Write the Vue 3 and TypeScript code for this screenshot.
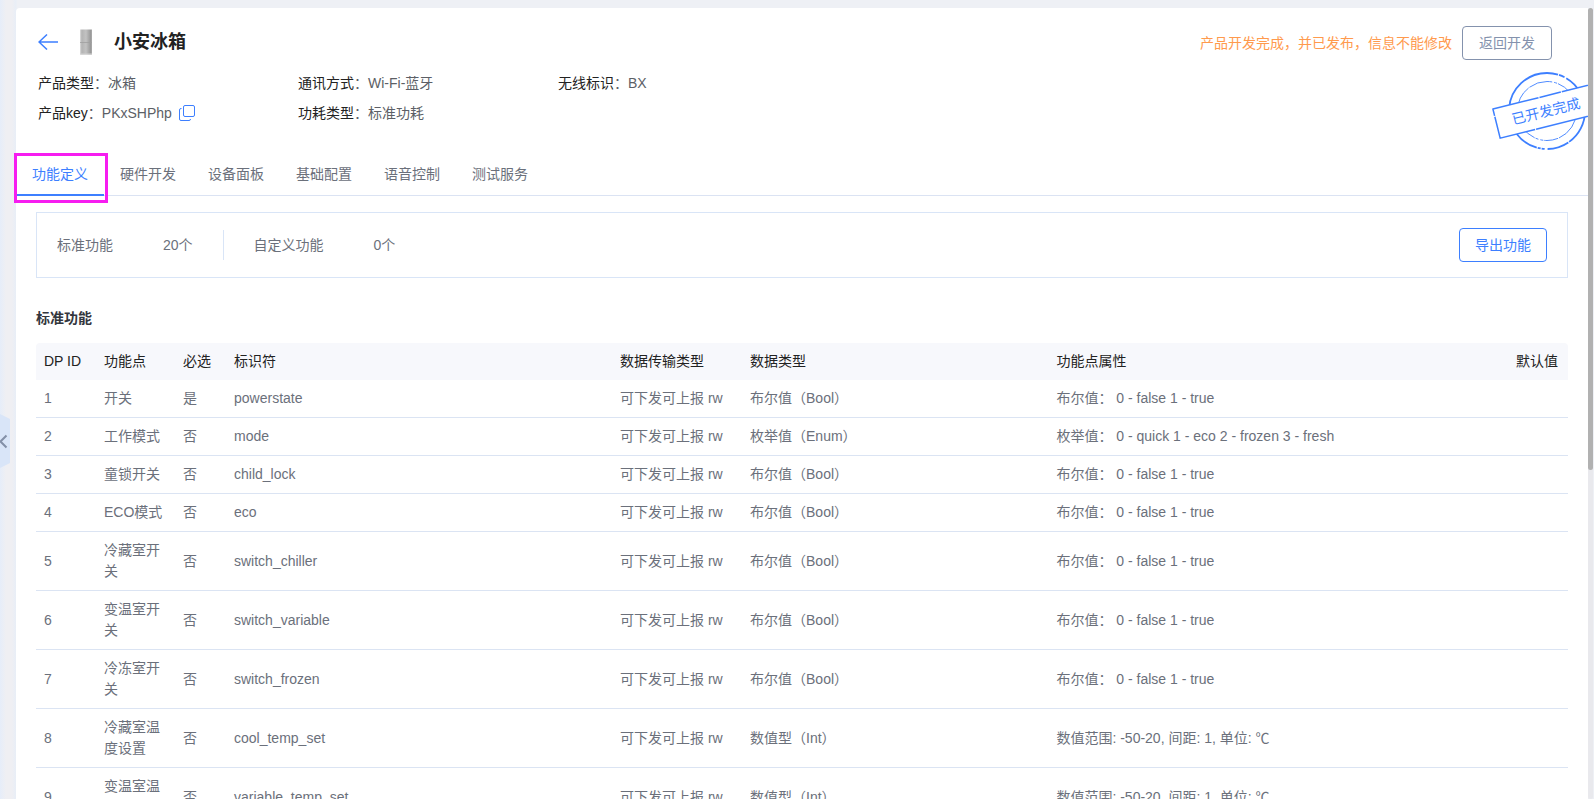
<script setup lang="ts">
import { ref } from 'vue'

interface InfoItem { label: string; value: string; copyable?: boolean }
interface DataPoint {
  id: number
  name: string
  required: string
  code: string
  kind: string
  attrs: string
}

const info: InfoItem[] = [
  { label: '产品类型', value: '冰箱' },
  { label: '通讯方式', value: 'Wi-Fi-蓝牙' },
  { label: '无线标识', value: 'BX' },
  { label: '产品key', value: 'PKxSHPhp', copyable: true },
  { label: '功耗类型', value: '标准功耗' },
]

const tabs: string[] = ['功能定义', '硬件开发', '设备面板', '基础配置', '语音控制', '测试服务']
const activeTab = ref(0)

const headers: string[] = ['DP ID', '功能点', '必选', '标识符', '数据传输类型', '数据类型', '功能点属性', '默认值']

const bool = '布尔值（Bool）'
const boolAttrs = '布尔值： 0 - false 1 - true'
const int = '数值型（Int）'
const intAttrs = '数值范围: -50-20, 间距: 1, 单位: ℃'

const rows: DataPoint[] = [
  { id: 1, name: '开关', required: '是', code: 'powerstate', kind: bool, attrs: boolAttrs },
  { id: 2, name: '工作模式', required: '否', code: 'mode', kind: '枚举值（Enum）', attrs: '枚举值： 0 - quick 1 - eco 2 - frozen 3 - fresh' },
  { id: 3, name: '童锁开关', required: '否', code: 'child_lock', kind: bool, attrs: boolAttrs },
  { id: 4, name: 'ECO模式', required: '否', code: 'eco', kind: bool, attrs: boolAttrs },
  { id: 5, name: '冷藏室开关', required: '否', code: 'switch_chiller', kind: bool, attrs: boolAttrs },
  { id: 6, name: '变温室开关', required: '否', code: 'switch_variable', kind: bool, attrs: boolAttrs },
  { id: 7, name: '冷冻室开关', required: '否', code: 'switch_frozen', kind: bool, attrs: boolAttrs },
  { id: 8, name: '冷藏室温度设置', required: '否', code: 'cool_temp_set', kind: int, attrs: intAttrs },
  { id: 9, name: '变温室温度设置', required: '否', code: 'variable_temp_set', kind: int, attrs: intAttrs },
]
</script>

<template>
  <div class="shell">
    <button class="collapse" type="button" aria-label="收起侧栏">
      <svg width="10" height="54" viewBox="0 0 10 54">
        <path d="M0 0L10 5V49L0 54Z" fill="#d9e5f8" />
        <path d="M6.500 21.500L0.500 27.500L6.500 33.500" fill="none" stroke="#8390a8" stroke-width="2" />
      </svg>
    </button>

    <main class="panel">
      <header class="head">
        <a class="back" href="#" aria-label="返回">
          <svg width="20" height="16" viewBox="0 0 20 16" fill="none" stroke="#3d7fff" stroke-width="1.500">
            <path d="M20 8H1M9 0.500L1 8L9 15.500" />
          </svg>
        </a>
        <svg class="fridge" width="12" height="26" viewBox="0 0 12 26">
          <defs>
            <linearGradient id="steel" x1="0" x2="1" y1="0" y2="0">
              <stop offset="0" stop-color="#dedede" />
              <stop offset="0.150" stop-color="#b4b4b4" />
              <stop offset="0.500" stop-color="#c2c2c2" />
              <stop offset="0.900" stop-color="#989898" />
              <stop offset="1" stop-color="#b0b0b0" />
            </linearGradient>
          </defs>
          <rect y="0.500" width="12" height="25" fill="url(#steel)" />
          <path d="M0 13.500H12" stroke="#a0a0a0" stroke-width="0.800" />
          <path d="M0 25H12" stroke="#d0d0d0" />
        </svg>
        <h1 class="title">小安冰箱</h1>
        <p class="notice">产品开发完成，并已发布，信息不能修改</p>
        <button class="btn btn-muted" type="button">返回开发</button>
      </header>

      <svg class="stamp" width="96" height="84" viewBox="0 0 96 84" fill="none" stroke="#3d7fff">
        <circle cx="55" cy="42" r="38" stroke-width="1.800" stroke-dasharray="36 1 22 3 3 1 3 1 50 2 68 1 6 2 40 0" />
        <circle cx="55" cy="42" r="29.500" stroke-width="0.900" stroke-dasharray="34 1 14 1 3 2 3 1 60 1 24 2 3 1 30 1" />
        <g transform="rotate(-14 55 42)">
          <rect x="3" y="27" width="114" height="30" fill="#fff" stroke-width="1.500" stroke-dasharray="47 1 22 1 150 1 58 1 40 0" />
          <text x="54" y="47" text-anchor="middle" class="stamp-text">已开发完成</text>
        </g>
      </svg>

      <dl class="info">
        <div v-for="item in info" :key="item.label" class="info-item">
          <dt>{{ item.label }}<span class="colon">：</span></dt>
          <dd>{{ item.value }}</dd>
          <button v-if="item.copyable" class="copy" type="button" aria-label="复制">
            <svg width="16" height="18" viewBox="0 0 16 18" fill="none" stroke="#3d7fff">
              <rect x="4.500" y="0.500" width="11" height="11" rx="1.500" />
              <path d="M2.500 3.500H2A1.500 1.500 0 0 0 0.500 5V14A1.500 1.500 0 0 0 2 15.500H10A1.500 1.500 0 0 0 11.500 14" />
            </svg>
          </button>
        </div>
      </dl>

      <nav class="tabs" role="tablist">
        <button
          v-for="(tab, i) in tabs"
          :key="tab"
          class="tab"
          :class="{ active: i === activeTab }"
          type="button"
          role="tab"
          :aria-selected="i === activeTab"
          @click="activeTab = i"
        >{{ tab }}</button>
        <span class="highlight"></span>
      </nav>

      <section class="body">
        <div class="summary">
          <div class="stat"><span>标准功能</span><span>20个</span></div>
          <div class="stat"><span>自定义功能</span><span>0个</span></div>
          <button class="btn btn-primary" type="button">导出功能</button>
        </div>

        <h2 class="subtitle">标准功能</h2>
        <table class="table">
          <colgroup>
            <col class="c-id" /><col class="c-name" /><col class="c-req" /><col />
            <col class="c-transfer" /><col class="c-kind" /><col class="c-attrs" /><col class="c-default" />
          </colgroup>
          <thead>
            <tr><th v-for="h in headers" :key="h" scope="col">{{ h }}</th></tr>
          </thead>
          <tbody>
            <tr v-for="row in rows" :key="row.id">
              <td>{{ row.id }}</td>
              <td>{{ row.name }}</td>
              <td>{{ row.required }}</td>
              <td>{{ row.code }}</td>
              <td>可下发可上报 rw</td>
              <td>{{ row.kind }}</td>
              <td>{{ row.attrs }}</td>
              <td></td>
            </tr>
          </tbody>
        </table>
      </section>
    </main>

    <div class="track"><div class="thumb"></div></div>
  </div>
</template>

<style>
body {
  margin: 0;
}
</style>

<style scoped>
.shell {
  position: relative;
  box-sizing: border-box;
  display: flex;
  height: 100vh;
  padding: 8px 1px 0 16px;
  overflow: hidden;
  background: linear-gradient(90deg, #e6edf9 0, #efeff3 6px, #efeff3 12px, #e8eef7 16px, #eef0f5 17px);
  color: #6b707b;
  font: 14px/21px "Liberation Sans", "Noto Sans CJK SC", sans-serif;
}
.panel {
  position: relative;
  flex: 1;
  min-width: 0;
  border-top-left-radius: 4px;
  background: #fff;
}
button {
  margin: 0;
  padding: 0;
  border: 0;
  background: none;
  color: inherit;
  font: inherit;
  cursor: pointer;
}
svg {
  display: block;
}
.collapse {
  position: absolute;
  left: 0;
  top: 414px;
}
.head {
  display: flex;
  align-items: center;
  padding: 18px 36px 0 22px;
}
.back,
.fridge,
.title {
  margin-bottom: 2px;
}
.fridge {
  margin-left: 22px;
  margin-right: 22px;
}
.title {
  margin-top: 0;
  color: #222;
  font-size: 18px;
  line-height: 24px;
}
.notice {
  margin: 0 10px 0 auto;
  color: #ff9a4d;
}
.btn {
  box-sizing: border-box;
  height: 34px;
  padding: 0 15px;
  border: 1px solid;
  border-radius: 4px;
}
.btn-muted {
  padding: 0 16px;
  color: #8492ad;
}
.btn-primary {
  margin-left: auto;
  color: #3d7fff;
}
.stamp {
  position: absolute;
  right: 0;
  top: 61px;
}
.stamp-text {
  fill: #3d7fff;
  stroke: none;
  font-size: 14px;
}
.info {
  display: grid;
  grid-template-columns: repeat(3, 260px);
  row-gap: 9px;
  margin: 0;
  padding: 13px 22px 0;
}
.info-item {
  display: flex;
  align-items: center;
  height: 21px;
}
.info dt {
  color: #222;
}
.info dd,
.colon {
  margin: 0;
  color: #5c5f66;
}
.copy {
  margin-left: 7px;
}
.tabs {
  position: relative;
  display: flex;
  margin-top: 29px;
  border-bottom: 1px solid #dbe3f3;
}
.tab {
  height: 43px;
  margin-bottom: -1px;
  padding: 2px 16px 0;
  border-bottom: 2px solid transparent;
}
.tab.active {
  border-color: #3d7fff;
  color: #3d7fff;
}
.highlight {
  position: absolute;
  left: -2px;
  top: 0;
  box-sizing: border-box;
  width: 94px;
  height: 50px;
  border: 3px solid #f61df0;
  pointer-events: none;
}
.body {
  padding: 16px 20px 0;
}
.summary {
  box-sizing: border-box;
  display: flex;
  align-items: center;
  height: 66px;
  padding: 0 20px;
  border: 1px solid #d9e5f7;
}
.stat {
  display: flex;
  gap: 50px;
  line-height: 30px;
}
.stat + .stat {
  margin-left: 30px;
  padding-left: 30px;
  border-left: 1px solid #d9e5f7;
}
.subtitle {
  margin: 30px 0 14px;
  color: #33363d;
  font-size: 14px;
}
.table {
  width: 100%;
  border-collapse: separate;
  border-spacing: 0;
  table-layout: fixed;
}
.table th,
.table td {
  padding: 8px;
  text-align: left;
}
.table th {
  background: #f7f8fc;
  color: #222;
  font-weight: 400;
}
.table th:first-child {
  border-top-left-radius: 4px;
}
.table th:last-child {
  border-top-right-radius: 4px;
}
.table td {
  border-bottom: 1px solid #dbe4f3;
}
.c-id,
.c-default {
  width: 60px;
}
.c-name {
  width: 79px;
}
.c-req {
  width: 51px;
}
.c-transfer {
  width: 130px;
}
.c-kind {
  width: 20%;
}
.c-attrs {
  width: 30%;
}
.track {
  width: 5px;
  border-radius: 3px;
  background: #e9e9ed;
}
.thumb {
  height: 58.400%;
  border-radius: 3px;
  background: #b1b1b1;
}
</style>
